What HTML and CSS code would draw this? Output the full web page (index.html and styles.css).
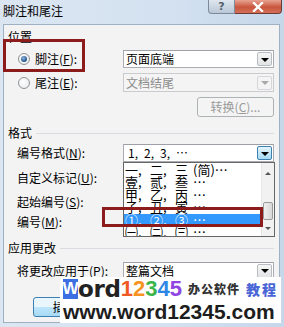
FILE: index.html
```html
<!DOCTYPE html>
<html lang="zh-CN">
<head>
<meta charset="utf-8">
<title>脚注和尾注</title>
<link rel="stylesheet" href="styles.css">
</head>
<body>
<div class="window">
  <div class="titlebar">
    <span class="title">脚注和尾注</span>
    <div class="caption-btns">
      <span class="btn-help">?</span>
      <span class="btn-close">
        <svg width="12" height="10" viewBox="0 0 12 10"><path d="M2 1 L10 9 M10 1 L2 9" stroke="#fff" stroke-width="2.4" stroke-linecap="square"/></svg>
      </span>
    </div>
  </div>
  <div class="client">
    <div class="group-head head-pos"><span>位置</span></div>
    <div class="row row-foot">
      <label class="label-col radio-label"><span class="radio checked"></span>脚注(<u>F</u>):</label>
      <div class="combo"><span class="combo-text">页面底端</span><span class="combo-btn"><i class="arrow"></i></span></div>
    </div>
    <div class="row row-end">
      <label class="label-col radio-label"><span class="radio"></span>尾注(<u>E</u>):</label>
      <div class="combo disabled"><span class="combo-text">文档结尾</span><span class="combo-btn"><i class="arrow"></i></span></div>
    </div>
    <div class="row row-btn">
      <span class="button disabled btn-convert">转换(<u>C</u>)...</span>
    </div>

    <div class="group-head head-fmt line"><span>格式</span></div>
    <div class="row row-numfmt">
      <label class="label-col sub">编号格式(<u>N</u>):</label>
      <div class="combo open"><span class="combo-text seq"><span class="n">1,</span><span class="n">2,</span><span class="n">3,</span><span>…</span></span><span class="combo-btn"><i class="arrow"></i></span></div>
    </div>
    <div class="row row-tall row-custom">
      <label class="label-col sub">自定义标记(<u>U</u>):</label>
    </div>
    <div class="row row-tall row-start">
      <label class="label-col sub">起始编号(<u>S</u>):</label>
    </div>
    <div class="row row-tall">
      <label class="label-col sub">编号(<u>M</u>):</label>
    </div>

    <div class="group-head head-apply line"><span>应用更改</span></div>
    <div class="row row-apply">
      <label class="label-col sub">将更改应用于(<u>P</u>):</label>
      <div class="combo"><span class="combo-text">整篇文档</span><span class="combo-btn"><i class="arrow"></i></span></div>
    </div>
    <div class="row row-bottom">
      <span class="button btn-insert">插入(<u>I</u>)</span>
    </div>
  </div>
</div>

<div class="listbox">
  <div class="list-items">
    <div class="item"><span class="c">一,</span><span class="c">二,</span><span class="c last">三</span><span class="tail">(简)…</span></div>
    <div class="item"><span class="c">壹,</span><span class="c">贰,</span><span class="c last">叁</span><span class="tail">…</span></div>
    <div class="item"><span class="c">甲,</span><span class="c">乙,</span><span class="c last">丙</span><span class="tail">…</span></div>
    <div class="item"><span class="c">子,</span><span class="c">丑,</span><span class="c last">寅</span><span class="tail">…</span></div>
    <div class="item selected"><span class="c">①,</span><span class="c">②,</span><span class="c last">③</span><span class="tail">…</span></div>
    <div class="item"><span class="c">㈠,</span><span class="c">㈡,</span><span class="c last">㈢</span><span class="tail">…</span></div>
  </div>
  <div class="scrollbar">
    <i class="sb-up"></i>
    <span class="sb-thumb"></span>
    <i class="sb-down"></i>
  </div>
</div>

<div class="mark mark-pos"></div>
<div class="mark mark-num"></div>

<div class="watermark">
  <div class="wm-top">
    <span class="wm-w">W</span><span class="wm-ord">ord</span><span class="wm-digits"><span class="d1">1</span><span class="d2">2</span><span class="d3">3</span><span class="d4">4</span><span class="d5">5</span></span><span class="wm-cn">办公软件</span><span class="wm-cn blue">教程</span>
  </div>
  <div class="wm-url">www.word12345.com</div>
</div>
</body>
</html>
```

FILE: styles.css
```css
* { box-sizing: border-box; }

body {
  margin: 0;
  width: 284px;
  height: 327px;
  overflow: hidden;
  position: relative;
  font-family: "Noto Sans CJK SC", "Noto Sans", sans-serif;
  font-size: 12px;
  color: #000;
}

u { text-decoration: underline; }

.window {
  width: 284px;
  height: 327px;
  background: linear-gradient(90deg, #dbe6f2 0%, #d3e1f0 60%, #c6d7ea 100%);
  display: flex;
  flex-direction: column;
}

.titlebar {
  height: 24px;
  display: flex;
  justify-content: space-between;
  align-items: flex-start;
}

.title {
  padding: 4px 0 0 3px;
  line-height: 14px;
  font-size: 12px;
}

.caption-btns {
  display: flex;
  margin-right: 2px;
}

.btn-help {
  width: 27px;
  height: 14px;
  border: 1px solid #7c8a9b;
  border-top: none;
  border-radius: 0 0 0 4px;
  background: linear-gradient(#dfe6ee, #b9c7d6);
  color: #555f6b;
  font: bold 11px/13px "DejaVu Sans", sans-serif;
  text-align: center;
}

.btn-close {
  width: 47px;
  height: 14px;
  border: 1px solid #6b3a35;
  border-left: none;
  border-top: none;
  border-radius: 0 0 4px 0;
  background: linear-gradient(#e8a493, #c9553c 55%, #d4705a);
  display: flex;
  align-items: center;
  justify-content: center;
}

.client {
  margin: 0 4px 0 3px;
  height: 299px;
  border: 1px solid #9fb0c3;
  background: #f3f3f3;
  padding: 5px 5px 0 0;
  display: flex;
  flex-direction: column;
}

.group-head {
  height: 14px;
  line-height: 14px;
  padding-left: 4px;
  display: flex;
  align-items: center;
}

.group-head.line::after {
  content: "";
  flex: 1;
  margin-left: 4px;
  border-top: 1px solid #d9dde2;
}

.head-fmt { margin-top: 9px; }
.head-apply { margin-top: 9px; }

.row {
  display: flex;
  align-items: center;
  height: 18px;
  flex-shrink: 0;
}

.row-foot { margin-top: 6px; }
.row-end { margin-top: 5px; height: 19px; }
.row-btn { margin-top: 5px; height: 20px; justify-content: flex-end; }
.row-numfmt { margin-top: 4px; }
.row-tall { height: 20px; }
.row-custom { margin-top: 6px; }
.row-start { margin-top: 4px; }
.row-apply { margin-top: 7px; height: 17px; }
.row-bottom { margin-top: 18px; height: 20px; padding-left: 29px; }

.label-col {
  width: 119px;
  flex-shrink: 0;
  white-space: nowrap;
  line-height: 14px;
}

.label-col.sub { padding-left: 13px; }

.radio-label {
  display: flex;
  align-items: center;
  padding-left: 14px;
}

.radio {
  width: 12px;
  height: 12px;
  border-radius: 50%;
  border: 1px solid #8f9499;
  background: radial-gradient(circle at 40% 40%, #ffffff, #e4e6e9);
  margin-right: 5px;
  position: relative;
}

.radio.checked::after {
  content: "";
  position: absolute;
  left: 2px;
  top: 2px;
  width: 6px;
  height: 6px;
  border-radius: 50%;
  background: radial-gradient(circle at 40% 35%, #8fb8e0, #1d4f85 70%);
}

.combo {
  width: 151px;
  height: 100%;
  border: 1px solid #abadb3;
  border-top-color: #9da0a6;
  background: #fff;
  display: flex;
  align-items: center;
  justify-content: space-between;
  padding: 0 1px 0 2px;
}

.combo-text {
  line-height: 14px;
  white-space: nowrap;
}

.combo-text.seq {
  display: flex;
  padding-left: 2px;
}

.combo-text.seq .n { width: 16px; }

.combo-btn {
  width: 15px;
  height: 14px;
  border: 1px solid #b9bdc3;
  border-radius: 2px;
  background: linear-gradient(#f6f6f6, #e2e3e5);
  display: flex;
  align-items: center;
  justify-content: center;
}

.arrow {
  width: 0;
  height: 0;
  border-left: 4px solid transparent;
  border-right: 4px solid transparent;
  border-top: 4px solid #000;
  margin-top: 1px;
}

.combo.disabled {
  background: #f4f4f4;
  border-color: #c9cbce;
  color: #8d8d8d;
}

.combo.disabled .combo-btn {
  border-color: #d4d6d9;
  background: #f4f4f4;
}

.combo.disabled .arrow { border-top-color: #a9a9a9; }

.combo.open .combo-btn {
  border-color: #3c7fb1;
  background: linear-gradient(#e5f4fc, #a7d9f5);
}

.button {
  height: 20px;
  border: 1px solid #707070;
  border-radius: 3px;
  background: linear-gradient(#f2f2f2 50%, #dddddd 50%, #cfcfcf);
  display: flex;
  align-items: center;
  justify-content: center;
  line-height: 14px;
}

.button.disabled {
  border-color: #adb2b5;
  background: #f4f4f4;
  color: #9a9a9a;
}

.btn-convert { width: 77px; }
.btn-insert { width: 75px; border-color: #3c7fb1; background: linear-gradient(#eaf6fd 50%, #bee6fd 50%, #a7d9f5); }

/* dropdown list popup */
.listbox {
  position: absolute;
  left: 123px;
  top: 162px;
  width: 152px;
  height: 75px;
  border: 1px solid #666;
  background: #fff;
  display: flex;
  overflow: hidden;
}

.list-items {
  flex: 1;
  overflow: hidden;
  padding-top: 1px;
}

.item {
  height: 12.4px;
  line-height: 12.4px;
  font-size: 13px;
  white-space: nowrap;
  padding-left: 1px;
  display: flex;
}

.item .c { width: 25px; flex-shrink: 0; }
.item .c.last { width: 18px; }

.item.selected {
  background: #3399ff;
  color: #fff;
}

.scrollbar {
  width: 13px;
  background: #f1f1f1;
  border-left: 1px solid #e6e6e6;
  position: relative;
}

.sb-up, .sb-down {
  position: absolute;
  left: 3px;
  width: 0;
  height: 0;
  border-left: 3px solid transparent;
  border-right: 3px solid transparent;
}

.sb-up { top: 9px; border-bottom: 3px solid #555; }
.sb-down { bottom: 6px; border-top: 3px solid #555; }

.sb-thumb {
  position: absolute;
  left: 1px;
  top: 39px;
  width: 10px;
  height: 18px;
  border: 1px solid #9a9a9a;
  border-radius: 2px;
  background: linear-gradient(90deg, #f0f0f0, #d8d8d8);
}

/* red highlight marks */
.mark {
  position: absolute;
  border: 3px solid #8c1c1c;
}

.mark-pos { left: 3px; top: 39px; width: 82px; height: 33px; }
.mark-num { left: 102px; top: 207px; width: 161px; height: 20px; }

/* watermark */
.watermark {
  position: absolute;
  left: 60px;
  top: 277px;
  width: 221px;
  height: 46px;
  background: #fff;
  padding-left: 3px;
}

.wm-top {
  display: flex;
  align-items: center;
  height: 20px;
  margin-top: 2px;
  white-space: nowrap;
  color: #222;
}

.wm-w {
  background: #3c6fe2;
  color: #fff;
  width: 15px;
  height: 20px;
  display: flex;
  align-items: center;
  justify-content: center;
  font: bold 17px/20px "Liberation Sans", sans-serif;
}

.wm-ord {
  font: bold 23px/20px "DejaVu Sans", sans-serif;
  color: #222;
  letter-spacing: -0.3px;
}

.wm-digits {
  font: bold 22px/20px "Liberation Sans", sans-serif;
}

.d1 { color: #f15a24; }
.d2 { color: #f7931e; }
.d3 { color: #39b54a; }
.d4 { color: #2e87e6; }
.d5 { color: #8f45e3; }

.wm-cn {
  font: 900 12px/14px "Noto Sans CJK SC", sans-serif;
  color: #333;
  letter-spacing: 1px;
  margin-left: 6px;
}

.wm-cn.blue {
  color: #4a66d6;
  font-size: 14px;
  letter-spacing: 2px;
  margin-left: 6px;
}

.wm-url {
  font: bold 21px/22px "Liberation Sans", sans-serif;
  color: #1d1d1d;
  margin-top: 2px;
  white-space: nowrap;
}
```
